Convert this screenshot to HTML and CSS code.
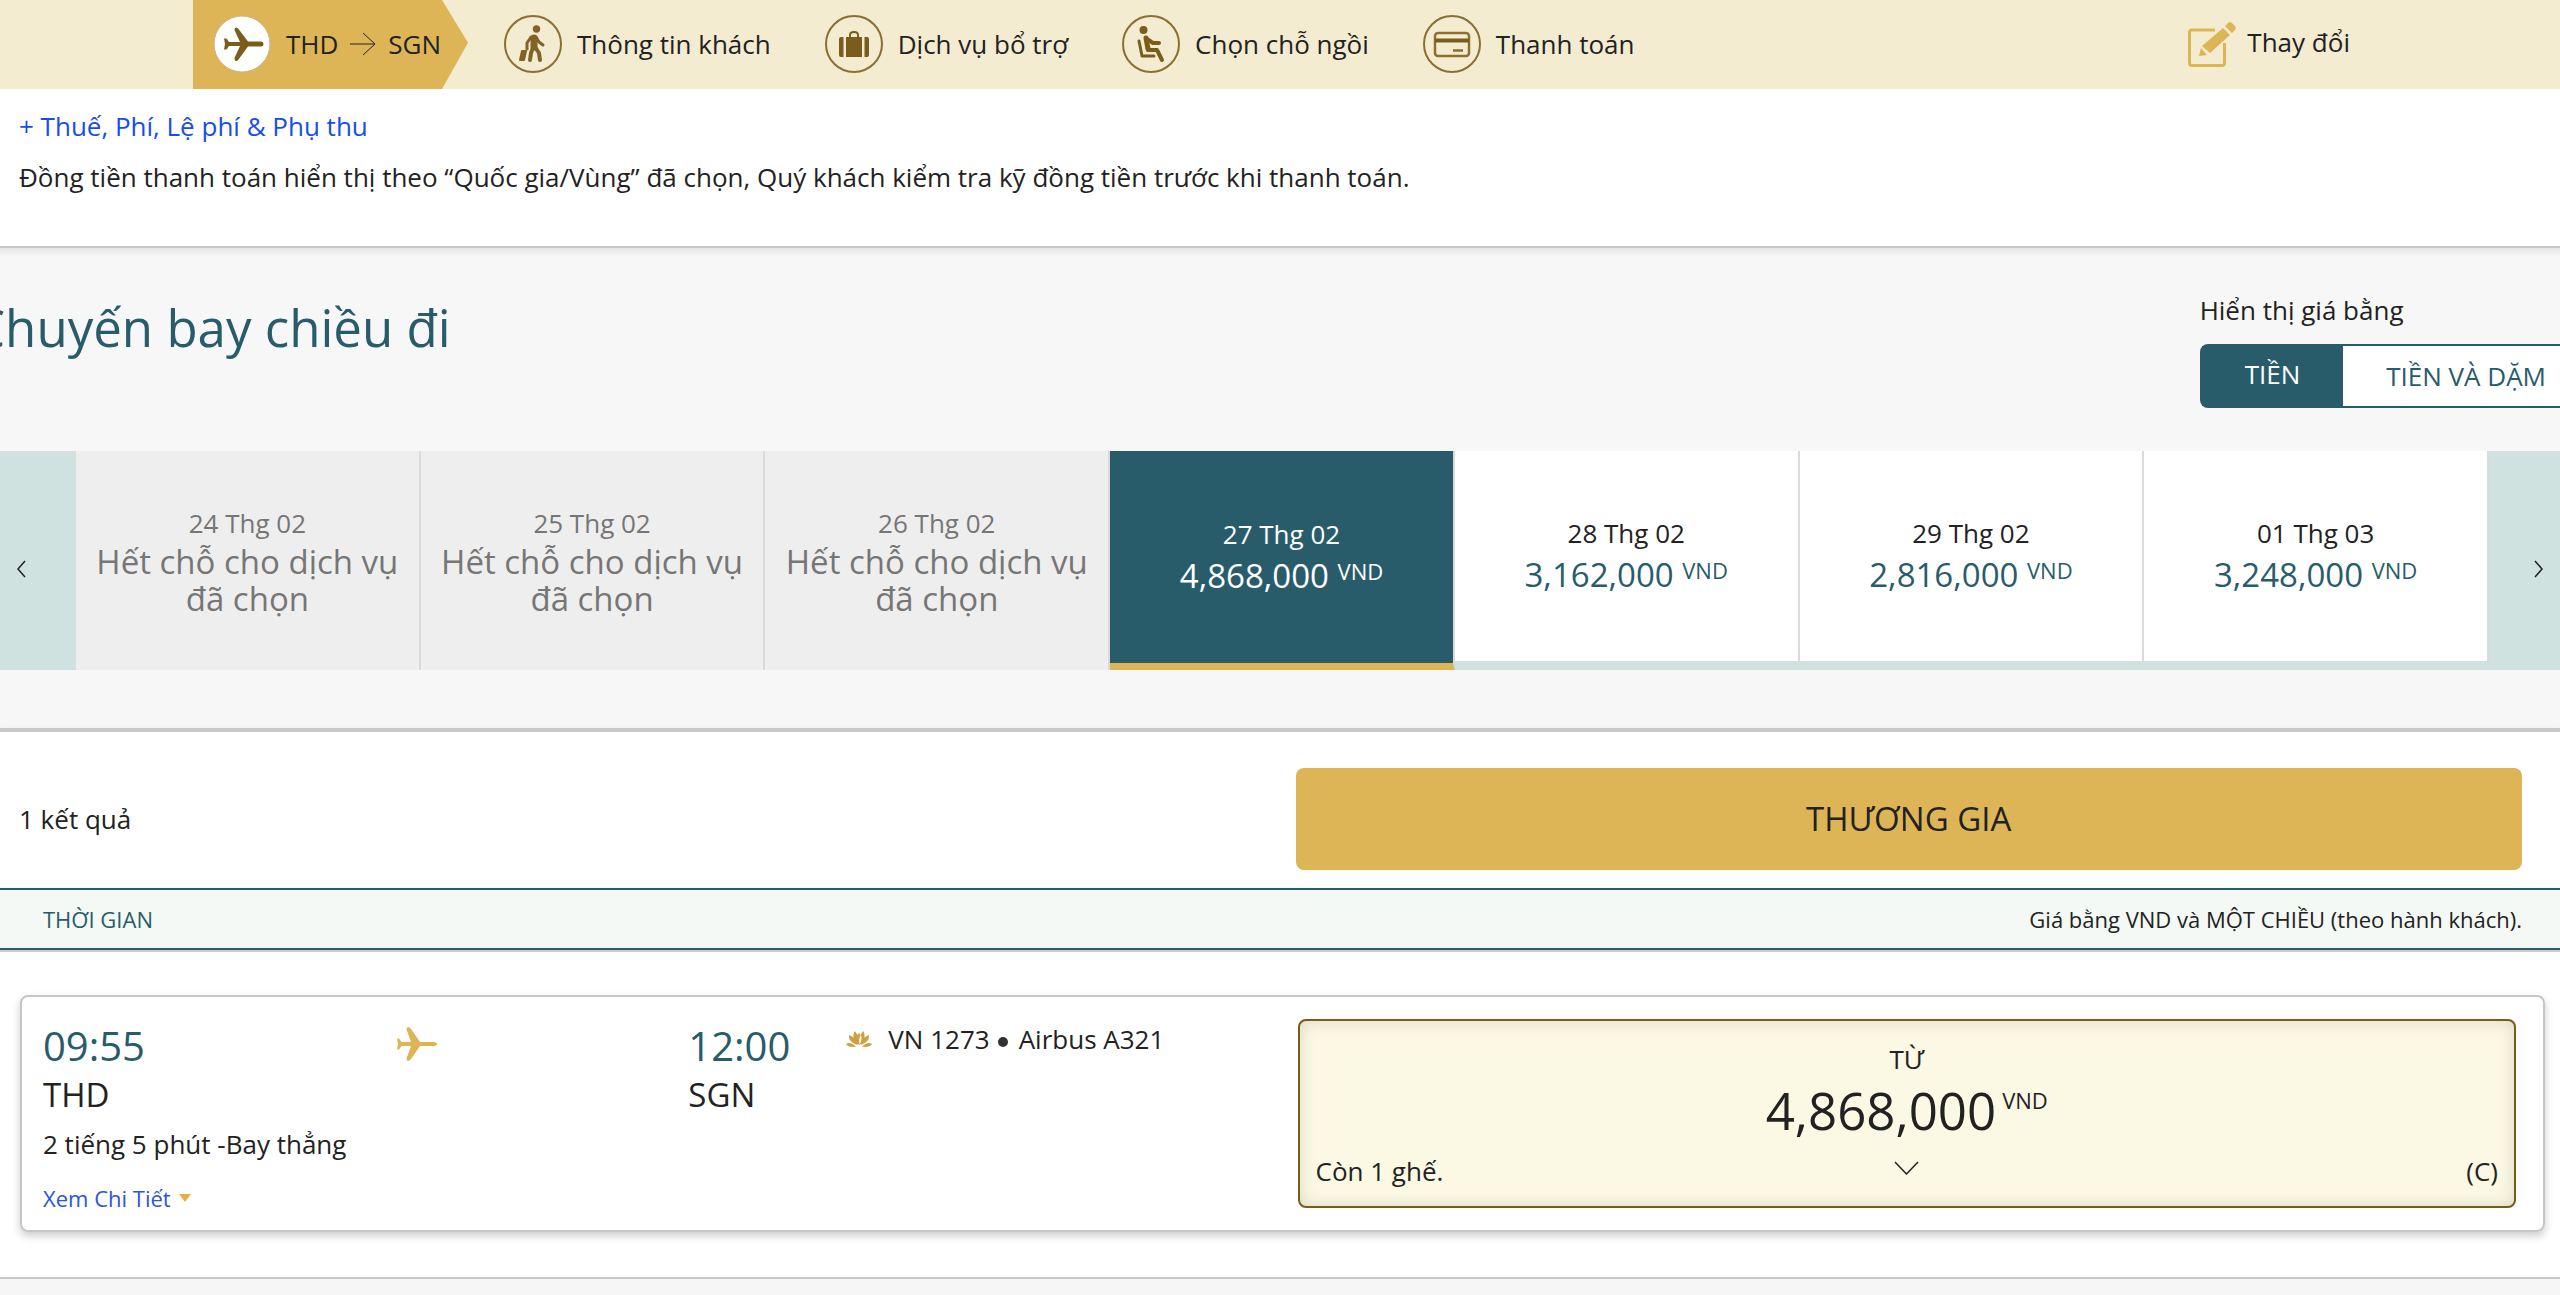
FILE: index.html
```html
<!DOCTYPE html>
<html lang="vi">
<head>
<meta charset="utf-8">
<meta name="viewport" content="width=device-width, initial-scale=1">
<title>Chuyến bay chiều đi</title>
<link rel="stylesheet" href="styles.css">
</head>
<body>
<header class="topbar">
  <nav class="steps" aria-label="Các bước đặt chỗ">
    <a class="step step-active" href="#chuyen-bay" aria-current="step">
      <svg class="step-icon" viewBox="0 0 58 58" aria-hidden="true">
        <circle cx="29" cy="29" r="28" fill="#fff" stroke="#c9b483" stroke-width="1"/>
        <path fill="#7a5d1c" d="M11 23.500h2.500l2.500 3.500h11L21.500 15q0-2.500 1.500-2.500t2.500 1.500L35 26.500h13q2.500 0 2.500 2.500T48 31.500H35l-9.500 13q-1 1.500-2.500 1.500T21.500 43L27 31H16l-2.500 3.500H11l1-5.500z"/>
      </svg>
      <span class="route">THD
        <svg class="route-arrow" viewBox="0 0 26 24" aria-hidden="true"><path d="M0 12h25M13 1l12 11-12 11" fill="none" stroke="#222" stroke-width="1"/></svg>
        SGN</span>
    </a>
    <a class="step" href="#hanh-khach">
      <svg class="step-icon" viewBox="0 0 58 58" aria-hidden="true">
        <circle cx="29" cy="29" r="28" fill="none" stroke="#8a6f31" stroke-width="2"/>
        <g fill="none" stroke="#7f6327" stroke-linecap="round" stroke-linejoin="round">
          <circle cx="32.500" cy="14" r="3.700" fill="#7f6327" stroke="none"/>
          <path d="M30 23v9" stroke-width="7"/>
          <path d="M27 22l-4 6v6M32 22l3 5 4 3" stroke-width="3"/>
          <path d="M29 33l-2 5-1 7M31 32l4 6 1 7" stroke-width="4"/>
          <path d="M22 36h-4l-2 9h4z" fill="#7f6327" stroke-width="2"/>
        </g>
      </svg>
      <span>Thông tin khách</span>
    </a>
    <a class="step" href="#dich-vu">
      <svg class="step-icon" viewBox="0 0 58 58" aria-hidden="true">
        <circle cx="29" cy="29" r="28" fill="none" stroke="#8a6f31" stroke-width="2"/>
        <path d="M25 22v-2q0-3 4-3t4 3v2" fill="none" stroke="#7a5d1c" stroke-width="2"/>
        <path fill="#7a5d1c" d="M21 22h16v20H21zM14 24q0-2 2-2h2.500v20H16q-2 0-2-2zM44 24q0-2-2-2h-2.500v20H42q2 0 2-2z"/>
      </svg>
      <span>Dịch vụ bổ trợ</span>
    </a>
    <a class="step" href="#cho-ngoi">
      <svg class="step-icon" viewBox="0 0 58 58" aria-hidden="true">
        <circle cx="29" cy="29" r="28" fill="none" stroke="#8a6f31" stroke-width="2"/>
        <g fill="none" stroke="#7a5d1c" stroke-linecap="round" stroke-linejoin="round">
          <circle cx="21.500" cy="15" r="4" fill="#7a5d1c" stroke="none"/>
          <path d="M24 23l2 11" stroke-width="5"/>
          <path d="M25 24l6 4h6" stroke-width="4"/>
          <path d="M26 35h9l5 10" stroke-width="4"/>
          <path d="M17 26l3 15h12" stroke-width="3"/>
        </g>
      </svg>
      <span>Chọn chỗ ngồi</span>
    </a>
    <a class="step" href="#thanh-toan">
      <svg class="step-icon" viewBox="0 0 58 58" aria-hidden="true">
        <circle cx="29" cy="29" r="28" fill="none" stroke="#8a6f31" stroke-width="2"/>
        <rect x="12" y="18" width="34" height="23" rx="3" fill="none" stroke="#8a6f31" stroke-width="2.500"/>
        <path d="M12 25.500h34" stroke="#7a5d1c" stroke-width="4"/>
        <path d="M30 35.500h10" stroke="#8a6f31" stroke-width="2.500"/>
      </svg>
      <span>Thanh toán</span>
    </a>
  </nav>
  <a class="change" href="#thay-doi">
    <svg class="change-icon" viewBox="0 0 48 46" aria-hidden="true">
      <path d="M27 8H4Q1.500 8 1.500 10.500V41Q1.500 43.500 4 43.500H34Q36.500 43.500 36.500 41V21" fill="none" stroke="#ddb557" stroke-width="3"/>
      <path fill="#ddb557" d="M11 34l2-8 6 7zM14 24L35 6l7 7-20 18zM37 4l3-3q2-1.500 4 0l3 3q1.500 2 0 4l-3 3z"/>
    </svg>
    <span class="change-label">Thay đổi</span>
  </a>
</header>

<main>
  <section class="notice">
    <a class="notice-link" href="#thue-phi">+ Thuế, Phí, Lệ phí &amp; Phụ thu</a>
    <p class="notice-text">Đồng tiền thanh toán hiển thị theo “Quốc gia/Vùng” đã chọn, Quý khách kiểm tra kỹ đồng tiền trước khi thanh toán.</p>
  </section>

  <section class="calendar" id="chuyen-bay">
    <div class="calendar-head">
      <h1 class="title">Chuyến bay chiều đi</h1>
      <div class="currency">
        <span class="currency-label" id="price-mode">Hiển thị giá bằng</span>
        <div class="toggle" role="group" aria-labelledby="price-mode">
          <button class="toggle-btn toggle-on" type="button" aria-pressed="true">TIỀN</button>
          <button class="toggle-btn" type="button" aria-pressed="false">TIỀN VÀ DẶM</button>
        </div>
      </div>
    </div>
    <div class="dates">
      <button class="pager pager-prev" type="button" aria-label="Ngày trước">
        <svg class="pager-icon" viewBox="0 0 10 18" aria-hidden="true"><path d="M9 1L2 9l7 8" fill="none" stroke="#222" stroke-width="1.500"/></svg>
      </button>
      <button class="day day-full" type="button" disabled><span>24 Thg 02</span><span class="full-note">Hết chỗ cho dịch vụ đã chọn</span></button>
      <button class="day day-full" type="button" disabled><span>25 Thg 02</span><span class="full-note">Hết chỗ cho dịch vụ đã chọn</span></button>
      <button class="day day-full" type="button" disabled><span>26 Thg 02</span><span class="full-note">Hết chỗ cho dịch vụ đã chọn</span></button>
      <button class="day day-on" type="button" aria-pressed="true"><span>27 Thg 02</span><span class="price">4,868,000 <sup class="unit">VND</sup></span></button>
      <button class="day" type="button"><span>28 Thg 02</span><span class="price">3,162,000 <sup class="unit">VND</sup></span></button>
      <button class="day" type="button"><span>29 Thg 02</span><span class="price">2,816,000 <sup class="unit">VND</sup></span></button>
      <button class="day" type="button"><span>01 Thg 03</span><span class="price">3,248,000 <sup class="unit">VND</sup></span></button>
      <button class="pager pager-next" type="button" aria-label="Ngày sau">
        <svg class="pager-icon" viewBox="0 0 10 18" aria-hidden="true"><path d="M1 1l7 8-7 8" fill="none" stroke="#222" stroke-width="1.500"/></svg>
      </button>
    </div>
  </section>

  <section class="results">
    <div class="results-head">
      <p class="count">1 kết quả</p>
      <button class="cabin" type="button">THƯƠNG GIA</button>
    </div>
    <div class="note-bar">
      <span class="note-time">THỜI GIAN</span>
      <span>Giá bằng VND và MỘT CHIỀU (theo hành khách).</span>
    </div>
    <article class="flight">
      <div class="journey">
        <div class="legs">
          <div><div class="time">09:55</div><div class="code">THD</div></div>
          <svg class="plane" viewBox="0 0 40 34" aria-hidden="true">
            <path fill="#ddb557" d="M0 11.500h2L4.500 15H14L9.500 2.500Q9.500 0 11 0t3 2l9 13h13q4 0 4 2t-4 2H23L14 32q-1.500 2-3 2t-1.500-2.500L14 19H4.500L2 22.500H0L1 17z"/>
          </svg>
          <div class="arrival"><div class="time">12:00</div><div class="code">SGN</div></div>
        </div>
        <p class="duration">2 tiếng 5 phút -Bay thẳng</p>
        <a class="details" href="#chi-tiet">Xem Chi Tiết <svg class="caret" viewBox="0 0 12 8" aria-hidden="true"><path d="M0 0h12L6 8z" fill="#e3b23c"/></svg></a>
      </div>
      <div class="aircraft">
        <svg class="lotus" viewBox="0 0 26 16" aria-hidden="true">
          <path fill="#cf9f45" d="M13 14Q8 7 13 2q5 5 0 12zM12.500 14Q5 8 8.500 0q5.500 5 4 14zM13.500 14q7.500-6 4-14-5.500 5-4 14zM11 14Q2 11 3 4q8 3 8 10zM15 14q9-3 8-10-8 3-8 10zM10 15.500Q3 17 0 13q4-3 10 2.500zM16 15.500q7 1.500 10-2.500-4-3-10 2.500z"/>
        </svg>
        <span>VN 1273</span><span class="dot"></span><span>Airbus A321</span>
      </div>
      <button class="fare" type="button">
        <span class="fare-from">TỪ</span>
        <span class="fare-price">4,868,000<sup class="fare-unit">VND</sup></span>
        <span class="fare-foot">
          <span>Còn 1 ghế.</span>
          <svg class="chevron" viewBox="0 0 25 14" aria-hidden="true"><path d="M1 1l11.500 12L24 1" fill="none" stroke="#222" stroke-width="1.500"/></svg>
          <span class="fare-class">(C)</span>
        </span>
      </button>
    </article>
  </section>
</main>
</body>
</html>
```
FILE: styles.css
```css
* {
  box-sizing: border-box;
}

body {
  margin: 0;
  background: #f6f6f6;
  color: #222;
  font: 26px/36px "Open Sans", "Noto Sans", sans-serif;
}

main {
  overflow-x: hidden;
}

h1,
p {
  margin: 0;
}

a {
  color: inherit;
  text-decoration: none;
}

button {
  margin: 0;
  padding: 0;
  border: 0;
  background: none;
  color: inherit;
  font: inherit;
}

svg {
  display: block;
  flex: none;
}

/* Booking steps */
.topbar {
  display: flex;
  justify-content: space-between;
  height: 89px;
  padding: 0 210px 0 193px;
  background: #f4ecd0;
}

.steps {
  display: flex;
  gap: 54px;
}

.step {
  display: flex;
  align-items: center;
  gap: 15px;
  padding-bottom: 2px;
}

.step-active {
  width: 275px;
  margin-right: -18px;
  padding-left: 20px;
  background: #ddb557;
  clip-path: polygon(0 0, 249px 0, 100% 48%, 249px 100%, 0 100%);
}

.step-icon {
  width: 58px;
  height: 58px;
}

.route {
  display: flex;
  align-items: center;
  gap: 12px;
}

.route-arrow {
  width: 26px;
  height: 24px;
}

.change {
  display: flex;
  align-items: center;
  gap: 11px;
}

.change-icon {
  width: 48px;
  height: 46px;
}

.change-label {
  padding-bottom: 6px;
}

/* Fee notice */
.notice {
  display: flex;
  flex-direction: column;
  align-items: flex-start;
  gap: 15px;
  padding: 19px 19px 51px;
  border-bottom: 2px solid #c8c8c8;
  background: #fff;
}

.notice-link {
  color: #1a4de8;
}

/* Fare calendar */
.calendar {
  padding: 44px 0 58px;
  border-bottom: 4px solid #c8c8c8;
  background: linear-gradient(#e4e4e4, #f7f7f7 8px);
}

.calendar-head {
  display: flex;
  justify-content: space-between;
  margin: 0 -31px 43px -27px;
}

.title {
  margin-top: 5px;
  color: #285c6b;
  font-size: 51px;
  font-weight: 400;
  line-height: 60px;
}

.currency {
  display: flex;
  flex-direction: column;
  gap: 16px;
}

.toggle {
  display: flex;
  height: 64px;
  border: 2px solid #285c6b;
  border-radius: 8px;
  background: #fff;
}

.toggle-btn {
  padding: 0 43px;
  color: #285c6b;
}

.toggle-on {
  padding-bottom: 4px;
  background: #285c6b;
  color: #fff;
  font-weight: 500;
}

.dates {
  display: grid;
  grid-template-columns: 76px repeat(7, minmax(0, 1fr)) 71px;
  min-height: 219px;
}

.pager {
  display: flex;
  align-items: center;
  padding-top: 16px;
  background: #d0e2e0;
}

.pager-prev {
  padding-left: 16px;
}

.pager-next {
  justify-content: flex-end;
  padding-right: 16px;
}

.pager-icon {
  width: 10px;
  height: 18px;
}

.day {
  display: flex;
  flex-direction: column;
  align-items: center;
  justify-content: center;
  padding-top: 2px;
  border-right: 2px solid #dadada;
  border-bottom: 9px solid #d0e2e0;
  background: #fff;
}

.day-full {
  padding-top: 0;
  border-bottom: 0;
  background: #eee;
  color: #767676;
}

.day-on {
  border-bottom: 7px solid #ddb557;
  background: #285c6b;
  color: #fff;
}

.full-note {
  margin-top: 2px;
  padding: 0 16px;
  font-size: 33px;
  line-height: 37px;
}

.price {
  color: #285c6b;
  font-size: 33px;
  line-height: 48px;
}

.day-on .price {
  color: #fff;
}

.unit {
  font-size: 22px;
  line-height: 0;
  vertical-align: 8px;
}

/* Results */
.results {
  padding: 36px 0 45px;
  border-bottom: 2px solid #c8c8c8;
  background: #fff;
  box-shadow: 0 4px 12px #ccc;
}

.results-head {
  display: flex;
  align-items: center;
  justify-content: space-between;
  margin: 0 38px 18px 19px;
}

.cabin {
  width: calc(50% - 25px);
  height: 102px;
  border-radius: 8px;
  background: #ddb557;
  font-size: 33px;
}

.note-bar {
  display: flex;
  align-items: center;
  justify-content: space-between;
  height: 62px;
  padding: 0 38px 0 43px;
  border: solid #285c6b;
  border-width: 2px 0;
  background: #f4f9f6;
  box-shadow: 0 2px #ccc;
  font-size: 22px;
}

.note-time {
  color: #285c6b;
}

.flight {
  display: flex;
  align-items: flex-start;
  margin: 45px 15px 0 20px;
  padding: 22px 27px 22px 21px;
  border: 2px solid #c6c6c6;
  border-radius: 8px;
  box-shadow: 0 4px 8px #ccc;
}

.journey {
  flex: 0 0 calc(32% + 12px);
}

.legs {
  display: flex;
  justify-content: space-between;
}

.arrival {
  padding-right: 56px;
}

.time {
  color: #285c6b;
  font-size: 40px;
  line-height: 54px;
}

.code {
  font-size: 33px;
  line-height: 44px;
}

.plane {
  width: 40px;
  height: 34px;
  margin-top: 8px;
}

.duration {
  margin-top: 9px;
}

.details {
  display: flex;
  align-items: center;
  gap: 8px;
  margin-top: 26px;
  color: #2a55e0;
  font-size: 22px;
  line-height: 20px;
}

.caret {
  width: 12px;
  height: 8px;
}

.aircraft {
  display: flex;
  flex: 1;
  align-items: center;
  margin-top: 2px;
}

.lotus {
  width: 26px;
  height: 16px;
  margin-right: 16px;
}

.dot {
  width: 10px;
  height: 10px;
  margin: 6px 11px 0 8px;
  border-radius: 50%;
  background: #333;
}

.fare {
  display: flex;
  flex: 0 0 calc(50% - 18px);
  flex-direction: column;
  padding: 20px 16px 17px;
  border: 2px solid #7a5c1a;
  border-radius: 8px;
  background: #fbf8e4;
  box-shadow: inset 0 0 16px #dcd9c0;
  text-align: center;
}

.fare-price {
  font-size: 51px;
  line-height: 66px;
}

.fare-unit {
  margin-left: 6px;
  font-size: 22px;
  line-height: 0;
  vertical-align: 21px;
}

.fare-foot {
  display: grid;
  grid-template-columns: 1fr auto 1fr;
  align-items: center;
  margin-top: 10px;
  text-align: left;
}

.fare-class {
  text-align: right;
}

.chevron {
  width: 25px;
  height: 14px;
  margin-bottom: 6px;
}
```
